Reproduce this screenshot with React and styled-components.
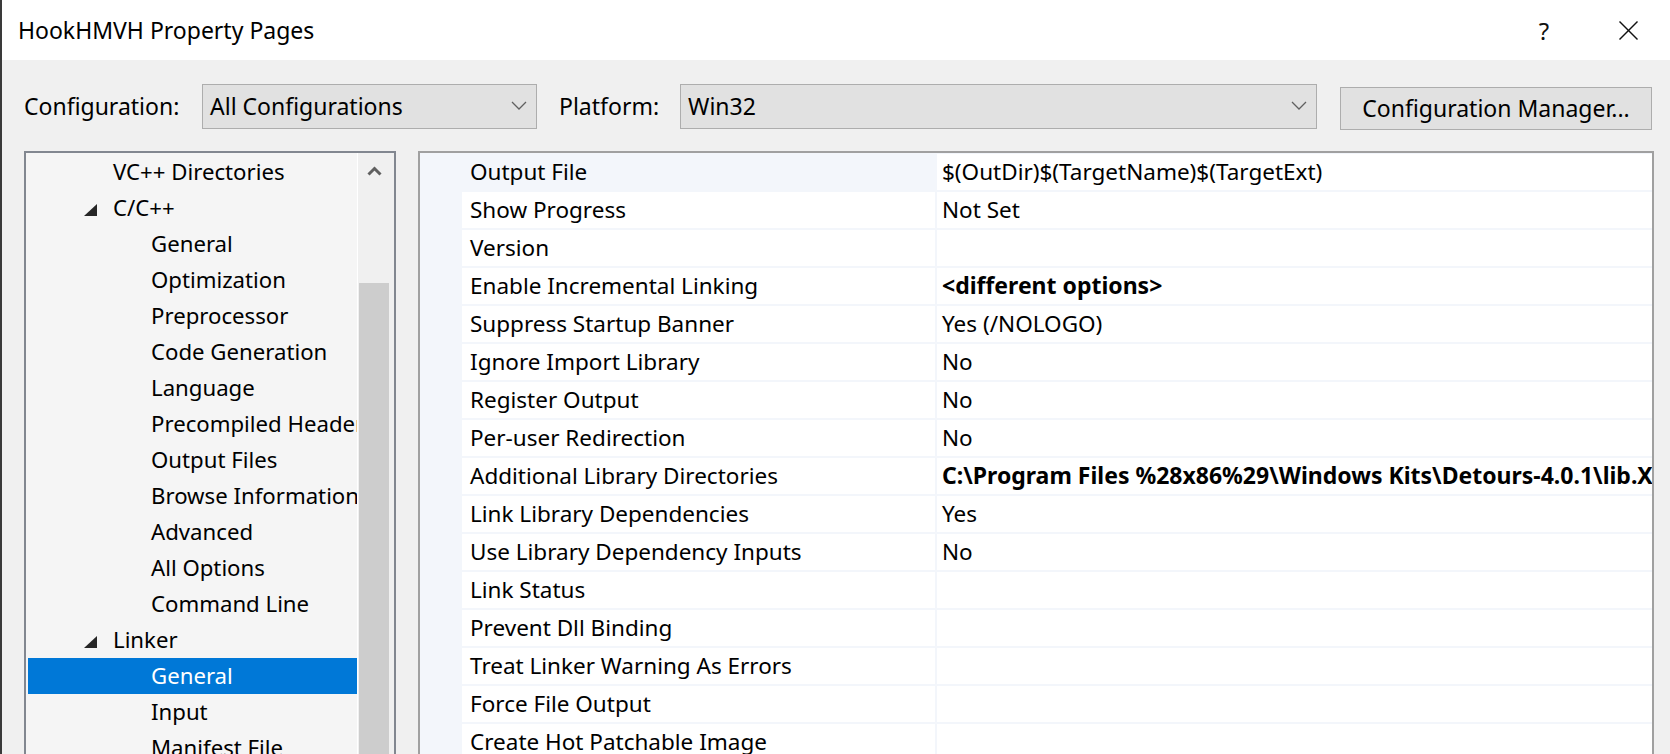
import React from "react";
import styled, { createGlobalStyle } from "styled-components";

const Global = createGlobalStyle`
  html, body { margin: 0; padding: 0; overflow: hidden; background: #f0f0f0; }
  body { font-family: "Noto Sans", "Open Sans", sans-serif; font-size: 22.5px; color: #000; }
  * { box-sizing: border-box; }
`;

const Window = styled.div`
  width: 1670px;
  height: 754px;
  overflow: hidden;
  border-left: 2px solid #3a3a3a;
  background: #f0f0f0;
  display: flex;
  flex-direction: column;
`;

const TitleBar = styled.div`
  height: 60px;
  flex: none;
  background: #ffffff;
  display: flex;
  align-items: center;
  padding-left: 16px;
`;

const Title = styled.div`
  flex: 1;
  font-size: 23px;
  padding-bottom: 1px;
`;

const CaptionButton = styled.div`
  width: 84px;
  height: 60px;
  display: flex;
  align-items: center;
  justify-content: center;
  font-size: 24px;
  color: #111;
`;

const Toolbar = styled.div`
  flex: none;
  display: flex;
  align-items: flex-start;
  padding: 24px 16px 21px 22px;
  font-size: 23px;
`;

const Label = styled.div`
  width: ${(p) => p.$width}px;
  flex: none;
  height: 45px;
  display: flex;
  align-items: center;
  padding-bottom: 2px;
  white-space: nowrap;
`;

const Combo = styled.div`
  width: ${(p) => p.$width}px;
  flex: none;
  height: 45px;
  background: #e1e1e1;
  border: 1px solid #adadad;
  display: flex;
  align-items: center;
  padding: 0 9px 2px 7px;
  margin-right: ${(p) => p.$gap}px;
`;

const ComboText = styled.div`
  flex: 1;
`;

const Button = styled.div`
  width: 312px;
  flex: none;
  height: 43px;
  margin-top: 3px;
  background: #e1e1e1;
  border: 1px solid #adadad;
  display: flex;
  align-items: center;
  justify-content: center;
  padding-bottom: 2px;
  white-space: nowrap;
`;

const Main = styled.div`
  flex: 1;
  display: flex;
  gap: 22px;
  padding: 0 16px 0 22px;
  min-height: 0;
`;

const TreePane = styled.div`
  width: 372px;
  height: 720px;
  flex: none;
  border: 2px solid #828790;
  background: #f5f5f5;
  display: flex;
`;

const TreeList = styled.div`
  width: 332px;
  flex: none;
  padding: 1px 0 0 2px;
  overflow: hidden;
  border-right: 1px solid #ffffff;
  font-size: 22.2px;
`;

const TreeRow = styled.div`
  height: 36px;
  display: flex;
  align-items: center;
  white-space: nowrap;
  padding-left: ${(p) => (p.$level === 1 ? 56 : 94)}px;
  background: ${(p) => (p.$selected ? "#0078d7" : "transparent")};
  color: ${(p) => (p.$selected ? "#ffffff" : "#000000")};
`;

const Expander = styled.div`
  width: 29px;
  flex: none;
  display: flex;
  align-items: center;
  padding-top: 3px;
`;

const TreeLabel = styled.span`
  padding-bottom: 2px;
`;

const ScrollBar = styled.div`
  flex: 1;
  background: #f0f0f0;
  display: flex;
  flex-direction: column;
`;

const ScrollArrow = styled.div`
  height: 130px;
  display: flex;
  justify-content: center;
  padding: 13px 4px 0 0;
`;

const ScrollThumb = styled.div`
  width: 30px;
  margin-left: 1px;
  flex: 1;
  background: #cdcdcd;
`;

const GridPane = styled.div`
  flex: 1;
  height: 720px;
  border: 2px solid #a0a0a0;
  background: #f3f6fb;
  padding: 1px 0 0 42px;
  overflow: hidden;
`;

const GridRow = styled.div`
  display: grid;
  grid-template-columns: 473px 1fr;
  column-gap: 2px;
  height: 36px;
  margin-bottom: 2px;
`;

const NameCell = styled.div`
  background: ${(p) => (p.$current ? "transparent" : "#ffffff")};
  display: flex;
  align-items: center;
  padding: 0 0 2px 8px;
  white-space: nowrap;
  overflow: hidden;
`;

const ValueCell = styled.div`
  background: #ffffff;
  display: flex;
  align-items: center;
  padding: 0 0 2px 5px;
  white-space: nowrap;
  overflow: hidden;
  font-weight: ${(p) => (p.$bold ? 700 : 400)};
  font-size: ${(p) => (p.$bold ? "23px" : "22.5px")};
`;

const Chevron = () => (
  <svg width="16" height="9" viewBox="0 0 16 9">
    <polyline points="1,1 8,8 15,1" fill="none" stroke="#606060" strokeWidth="1.3" />
  </svg>
);

const ExpandedTriangle = () => (
  <svg width="13" height="12" viewBox="0 0 13 12">
    <polygon points="13,0 13,12 0,12" fill="#262626" />
  </svg>
);

const treeItems = [
  { label: "VC++ Directories", level: 1 },
  { label: "C/C++", level: 1, expanded: true },
  { label: "General", level: 2 },
  { label: "Optimization", level: 2 },
  { label: "Preprocessor", level: 2 },
  { label: "Code Generation", level: 2 },
  { label: "Language", level: 2 },
  { label: "Precompiled Headers", level: 2 },
  { label: "Output Files", level: 2 },
  { label: "Browse Information", level: 2 },
  { label: "Advanced", level: 2 },
  { label: "All Options", level: 2 },
  { label: "Command Line", level: 2 },
  { label: "Linker", level: 1, expanded: true },
  { label: "General", level: 2, selected: true },
  { label: "Input", level: 2 },
  { label: "Manifest File", level: 2 },
  { label: "Debugging", level: 2 },
];

const props = [
  { name: "Output File", value: "$(OutDir)$(TargetName)$(TargetExt)", current: true },
  { name: "Show Progress", value: "Not Set" },
  { name: "Version", value: "" },
  { name: "Enable Incremental Linking", value: "<different options>", bold: true },
  { name: "Suppress Startup Banner", value: "Yes (/NOLOGO)" },
  { name: "Ignore Import Library", value: "No" },
  { name: "Register Output", value: "No" },
  { name: "Per-user Redirection", value: "No" },
  {
    name: "Additional Library Directories",
    value: "C:\\Program Files %28x86%29\\Windows Kits\\Detours-4.0.1\\lib.X86;%(AdditionalLibraryDirectories)",
    bold: true,
  },
  { name: "Link Library Dependencies", value: "Yes" },
  { name: "Use Library Dependency Inputs", value: "No" },
  { name: "Link Status", value: "" },
  { name: "Prevent Dll Binding", value: "" },
  { name: "Treat Linker Warning As Errors", value: "" },
  { name: "Force File Output", value: "" },
  { name: "Create Hot Patchable Image", value: "" },
  { name: "Specify Section Attributes", value: "" },
];

export default function App() {
  return (
    <>
      <Global />
      <Window>
        <TitleBar>
          <Title>HookHMVH Property Pages</Title>
          <CaptionButton>?</CaptionButton>
          <CaptionButton>
            <svg width="19" height="19" viewBox="0 0 19 19">
              <line x1="0.5" y1="0.5" x2="18.5" y2="18.5" stroke="#111" strokeWidth="1.4" />
              <line x1="18.5" y1="0.5" x2="0.5" y2="18.5" stroke="#111" strokeWidth="1.4" />
            </svg>
          </CaptionButton>
        </TitleBar>
        <Toolbar>
          <Label $width={178}>Configuration:</Label>
          <Combo $width={335} $gap={22}>
            <ComboText>All Configurations</ComboText>
            <Chevron />
          </Combo>
          <Label $width={121}>Platform:</Label>
          <Combo $width={637} $gap={23}>
            <ComboText>Win32</ComboText>
            <Chevron />
          </Combo>
          <Button>Configuration Manager...</Button>
        </Toolbar>
        <Main>
          <TreePane>
            <TreeList>
              {treeItems.map((it, i) => (
                <TreeRow key={i} $level={it.level} $selected={it.selected}>
                  <Expander>{it.expanded ? <ExpandedTriangle /> : null}</Expander>
                  <TreeLabel>{it.label}</TreeLabel>
                </TreeRow>
              ))}
            </TreeList>
            <ScrollBar>
              <ScrollArrow>
                <svg width="15" height="10" viewBox="0 0 15 10">
                  <polyline points="1.5,8.5 7.5,2.5 13.5,8.5" fill="none" stroke="#606060" strokeWidth="3" />
                </svg>
              </ScrollArrow>
              <ScrollThumb />
            </ScrollBar>
          </TreePane>
          <GridPane>
            {props.map((p, i) => (
              <GridRow key={i}>
                <NameCell $current={p.current}>{p.name}</NameCell>
                <ValueCell $bold={p.bold}>{p.value}</ValueCell>
              </GridRow>
            ))}
          </GridPane>
        </Main>
      </Window>
    </>
  );
}
